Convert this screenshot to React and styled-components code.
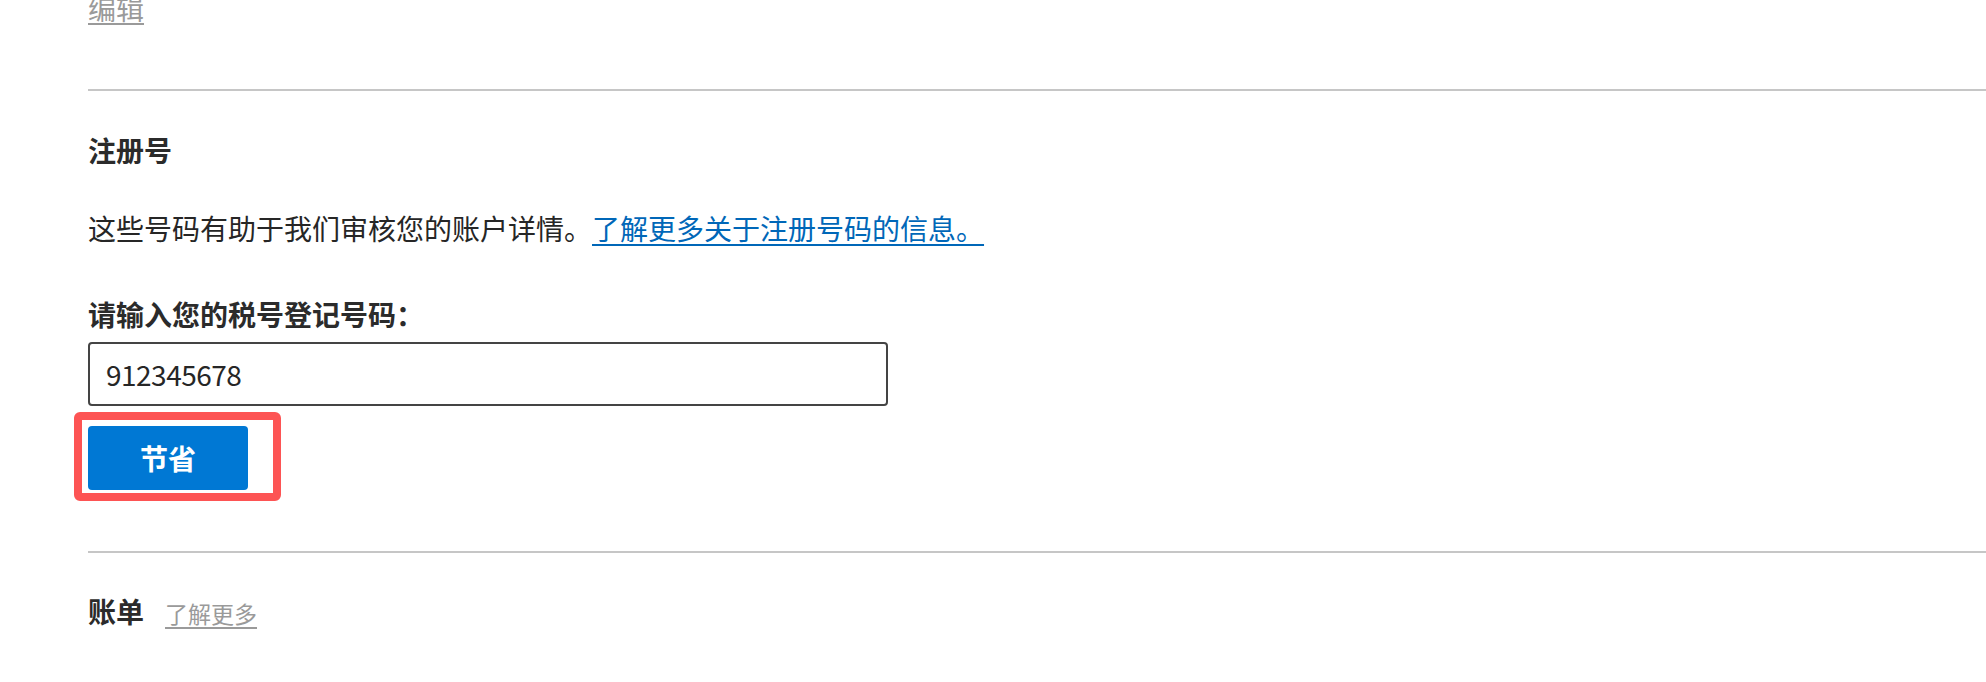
import styled, { createGlobalStyle } from "styled-components";

const GlobalStyle = createGlobalStyle`
  html, body {
    margin: 0;
    padding: 0;
    background: #ffffff;
  }
  body {
    font-family: "Noto Sans CJK SC", "Noto Sans", sans-serif;
    font-size: 28px;
    line-height: 40px;
    color: #262626;
    overflow: hidden;
  }
`;

const Page = styled.main`
  display: flex;
  flex-direction: column;
  padding-left: 88px;
  margin-top: -12px;
`;

const MutedLink = styled.a`
  color: #9a9a9a;
  font-size: ${(props) => props.$size || "28px"};
  text-decoration: underline;
  text-decoration-thickness: 2px;
  text-underline-offset: ${(props) => props.$offset || "3px"};
  cursor: pointer;
`;

const Divider = styled.hr`
  border: 0;
  height: 2px;
  margin: ${(props) => props.$margin || "0"};
  background: #c6c6c6;
`;

const SectionTitle = styled.h2`
  margin: 0;
  font-size: 28px;
  line-height: 40px;
  font-weight: 700;
  color: #2b2b2b;
`;

const Paragraph = styled.p`
  margin: 38px 0 0;
  font-size: 28px;
  line-height: 40px;
`;

const BlueLink = styled.a`
  color: #0067b8;
  text-decoration: underline;
  text-decoration-thickness: 2px;
  text-underline-offset: 4px;
  cursor: pointer;
`;

const Field = styled.label`
  display: flex;
  flex-direction: column;
  gap: 8px;
  margin-top: 46px;
`;

const FieldLabel = styled.span`
  font-weight: 700;
  color: #2b2b2b;
`;

const TextInput = styled.input`
  box-sizing: border-box;
  width: 800px;
  height: 64px;
  padding: 0 16px;
  border: 2px solid #444444;
  border-radius: 4px;
  font-family: "Noto Sans CJK SC", "Noto Sans", sans-serif;
  font-size: 28px;
  letter-spacing: -0.5px;
  color: #262626;
  outline: none;
`;

const ButtonSlot = styled.div`
  position: relative;
  align-self: flex-start;
  margin-top: 20px;
`;

const PrimaryButton = styled.button`
  width: 160px;
  height: 64px;
  border: 0;
  border-radius: 4px;
  background: #0078d4;
  color: #ffffff;
  font-family: "Noto Sans CJK SC", "Noto Sans", sans-serif;
  font-size: 28px;
  font-weight: 700;
  cursor: pointer;
`;

const Highlight = styled.span`
  position: absolute;
  left: -14px;
  top: -14px;
  width: 207px;
  height: 89px;
  box-sizing: border-box;
  border: 8px solid #fd5454;
  border-radius: 6px;
  pointer-events: none;
`;

const TitleRow = styled.div`
  display: flex;
  align-items: baseline;
  gap: 21px;
`;

export default function App() {
  return (
    <>
      <GlobalStyle />
      <Page>
        <div>
          <MutedLink>编辑</MutedLink>
        </div>
        <Divider $margin="61px 0 39px" />

        <SectionTitle>注册号</SectionTitle>
        <Paragraph>
          这些号码有助于我们审核您的账户详情。
          <BlueLink>了解更多关于注册号码的信息。</BlueLink>
        </Paragraph>

        <Field>
          <FieldLabel>请输入您的税号登记号码：</FieldLabel>
          <TextInput defaultValue="912345678" />
        </Field>

        <ButtonSlot>
          <PrimaryButton>节省</PrimaryButton>
          <Highlight />
        </ButtonSlot>

        <Divider $margin="61px 0 38px" />

        <TitleRow>
          <SectionTitle>账单</SectionTitle>
          <MutedLink $size="23px" $offset="4px">
            了解更多
          </MutedLink>
        </TitleRow>
      </Page>
    </>
  );
}
